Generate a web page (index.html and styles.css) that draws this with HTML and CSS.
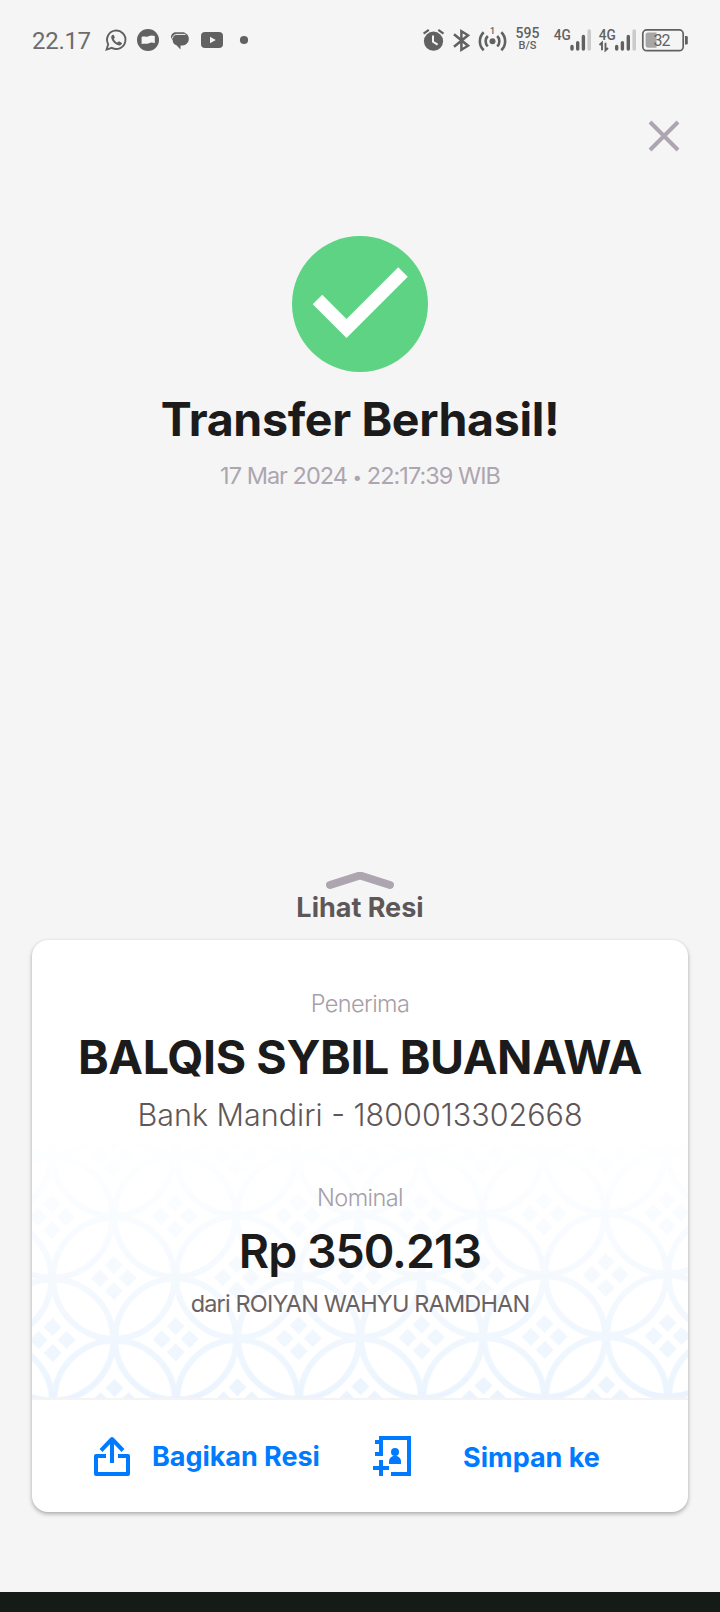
FILE: index.html
```html
<!DOCTYPE html>
<html lang="id">
<head>
<meta charset="utf-8">
<title>Transfer Berhasil</title>
<link rel="stylesheet" href="styles.css">
</head>
<body>
<main class="screen">
  <header class="status">
    <span class="clock">22.17</span>
    <svg class="ico" width="32" height="40" viewBox="100 20 32 40"><path d="M106.6 49.6l1.6-5.4a9.2 9.2 0 1 1 3.6 3.6z" fill="none" stroke="#616161" stroke-width="1.9"/><path d="M112.8 34.8c-1.400.6-1.900 2-1.400 3.700 1.100 3.600 3.900 6.200 7.600 7 1.400.2 2.900-.8 3-2.500l-3-1.700-1.700 1.300c-1.700-.8-2.900-2-3.500-3.600l1.100-1.400-1.100-2.700z" fill="#616161"/></svg>
    <svg class="ico" width="32" height="40" viewBox="132 20 32 40"><circle cx="148" cy="40" r="11" fill="#616161"/><path d="M141.600 37c2.200-1.200 4.400.4 6.800-.8 2.200-.9 4-1 6.400-.2v7.200c-2.400-.9-4.200-.8-6.400.2-2.400 1-4.600-.2-6.800.8z" fill="#f5f5f5"/></svg>
    <svg class="ico" width="32" height="40" viewBox="164 20 32 40"><path d="M171.600 38.500c-1-1.500-.8-3.300.4-4.300.8-1.300 2.300-1.900 4-1.900h6.500c1.800 0 3 .6 4 1.800 1.500.8 2.300 2.600 2.300 4.800 0 3.600-2.800 6.300-6.300 6.500h-2v4l-4-4.200c-2.400-.6-3.800-2.600-3.800-5z" fill="#616161"/><path d="M172.300 38.500c.6-2.900 2.200-4.100 4.700-4.100h8.500" fill="none" stroke="#f5f5f5" stroke-width="1"/></svg>
    <svg class="ico" width="32" height="40" viewBox="196 20 32 40"><rect x="201" y="32" width="22" height="16" rx="4" fill="#616161"/><path d="M210 36.800l5.800 3.200-5.800 3.200z" fill="#f5f5f5"/></svg>
    <svg class="ico" width="32" height="40" viewBox="228 20 32 40"><circle cx="244" cy="40" r="4.100" fill="#616161"/></svg>
    <span class="spring"></span>
    <svg class="ico" width="30" height="40" viewBox="420 20 30 40"><circle cx="433.500" cy="41.200" r="9.600" fill="#616161"/><path d="M423.600 33.700l5.200-3.900M438.300 29.800l5.200 3.900" stroke="#616161" stroke-width="2.200"/><path d="M433 35.500v6.300l4.600 2.900" fill="none" stroke="#f5f5f5" stroke-width="2"/></svg>
    <svg class="ico" width="26" height="40" viewBox="450 20 26 40"><path d="M454 34.300l14 11.400-6.600 4V31.300l6.600 4-14 11.400" fill="none" stroke="#616161" stroke-width="2.500"/></svg>
    <svg class="ico" width="34" height="40" viewBox="476 20 34 40"><circle cx="492.500" cy="41.200" r="3" fill="#616161"/><path d="M487.800 46.400a7.300 7.300 0 0 1 0-10.400M497.200 36a7.300 7.300 0 0 1 0 10.400M483.700 50.200a12.500 12.500 0 0 1 0-18M501.300 32.200a12.500 12.500 0 0 1 0 18" fill="none" stroke="#616161" stroke-width="2.600"/><text x="490" y="34" class="st" font-size="9">1</text></svg>
    <span class="speed"><b>595</b><i>B/S</i></span>
    <svg class="ico" width="44" height="40" viewBox="550 20 44 40"><text x="553.700" y="39.800" class="st" font-size="14" textLength="17" lengthAdjust="spacingAndGlyphs">4G</text><path d="M572 46.500v2.500M577.700 42.800v6.200M583.400 36.500v12.500" stroke="#616161" stroke-width="3.400" stroke-linecap="round"/><path d="M589.200 31v18" stroke="#cbcbcb" stroke-width="3.600" stroke-linecap="round"/></svg>
    <svg class="ico" width="46" height="40" viewBox="594 20 46 40"><text x="598.700" y="39.800" class="st" font-size="14" textLength="17" lengthAdjust="spacingAndGlyphs">4G</text><path d="M599.500 45l2.500-2.300v7.600M605.500 42.700v7.600l2.500-2.300" fill="none" stroke="#616161" stroke-width="1.900"/><path d="M616.700 46.500v2.500M622.400 42.800v6.200M628.300 36.500v12.500" stroke="#616161" stroke-width="3.400" stroke-linecap="round"/><path d="M634.200 31v18" stroke="#cbcbcb" stroke-width="3.600" stroke-linecap="round"/></svg>
    <svg class="ico" width="50" height="40" viewBox="640 20 50 40"><rect x="642.800" y="29.900" width="40.400" height="20.800" rx="4" fill="none" stroke="#616161" stroke-width="1.700"/><path d="M648 32.400h8.500v15.300H648q-2.400 0-2.400-2.400V34.800q0-2.400 2.400-2.400z" fill="#a6a6a6"/><path d="M685 36h1.500q1.300 0 1.300 1.300v6q0 1.300-1.300 1.300H685z" fill="#616161"/><text x="653.500" y="45.500" class="num" font-size="16" textLength="17">32</text></svg>
  </header>

  <div class="topbar">
    <svg width="32" height="32" viewBox="0 0 32 32"><path d="M2 2l28 28M30 2L2 30" stroke="#ada5af" stroke-width="4"/></svg>
  </div>

  <section class="result">
    <svg width="136" height="136" viewBox="0 0 136 136"><circle cx="68" cy="68" r="68" fill="#5dd383"/><path d="M25.500 63.500L54.500 92.500L111 36" fill="none" stroke="#fff" stroke-width="13.500"/></svg>
    <h1 class="title">Transfer Berhasil!</h1>
    <p class="date">17 Mar 2024 <span class="dot">•</span> 22:17:39 WIB</p>
  </section>

  <section class="peek">
    <svg width="68" height="20" viewBox="0 0 68 20"><path d="M4 13L34 3.500L64 13" fill="none" stroke="#ada5af" stroke-width="8" stroke-linecap="round" stroke-linejoin="round"/></svg>
    <p class="see">Lihat Resi</p>
  </section>

  <article class="card">
    <div class="details">
      <svg class="batik" width="656" height="268" viewBox="32 1130 656 268">
        <defs>
          <pattern id="kawung" x="-8.800" y="1217" width="123" height="123" patternUnits="userSpaceOnUse" patternTransform="rotate(-0.380 52 1340)">
            <g fill="none" stroke="#ebf4fe" stroke-width="6">
              <circle cx="61.500" cy="0" r="60.500"/><circle cx="61.500" cy="123" r="60.500"/>
              <circle cx="0" cy="61.500" r="60.500"/><circle cx="123" cy="61.500" r="60.500"/>
            </g>
            <g fill="#ebf4fe">
              <path id="gem" d="M61.500-22l9 9-9 9-9-9zM61.500 4l9 9-9 9-9-9zM47.500-9l9 9-9 9-9-9zM75.500-9l9 9-9 9-9-9z"/>
              <use href="#gem" y="123"/><use href="#gem" x="-61.500" y="61.500"/><use href="#gem" x="61.500" y="61.500"/>
            </g>
          </pattern>
          <linearGradient id="fade" x1="0" y1="0" x2="0" y2="1"><stop offset="0" stop-color="#000"/><stop offset=".5" stop-color="#777"/><stop offset="1" stop-color="#fff"/></linearGradient>
          <mask id="veil" maskUnits="userSpaceOnUse" x="32" y="1130" width="656" height="268"><rect x="32" y="1130" width="656" height="268" fill="url(#fade)"/></mask>
        </defs>
        <rect x="32" y="1130" width="656" height="268" fill="url(#kawung)" mask="url(#veil)"/>
      </svg>
      <p class="label receiver">Penerima</p>
      <h2 class="name">BALQIS SYBIL BUANAWA</h2>
      <p class="bank">Bank Mandiri - 1800013302668</p>
      <p class="label nominal">Nominal</p>
      <p class="amount">Rp 350.213</p>
      <p class="from">dari ROIYAN WAHYU RAMDHAN</p>
    </div>
    <footer class="actions">
      <a class="action share">
        <svg width="36" height="40" viewBox="0 0 36 40"><path d="M12 20H2v18h32V20H24M18 27V3M7 14.500L18 3l11 11.500" fill="none" stroke="#007bff" stroke-width="4" stroke-linejoin="round"/></svg>
        <span class="share-text">Bagikan Resi</span>
      </a>
      <a class="action save">
        <svg width="38" height="40" viewBox="0 0 38 40"><path d="M2 6h6V2h28v36H18M8 6v12H2M8 24v16M0 32h16" fill="none" stroke="#007bff" stroke-width="4"/><circle cx="22" cy="16" r="4" fill="#007bff"/><path d="M16 28v-2.500q0-4 4-5.500h4q4 1.500 4 5.500V28z" fill="#007bff"/></svg>
        <span class="save-text">Simpan ke</span>
      </a>
    </footer>
  </article>
  <div class="navbar"></div>
</main>
</body>
</html>
```
FILE: styles.css
```css
* { box-sizing: border-box; margin: 0; }
body { background: #f5f5f5; font-family: Inter, "Liberation Sans", sans-serif; }
svg { display: block; flex: none; }
.screen { width: 720px; height: 1612px; display: flex; flex-direction: column; overflow: hidden; }

.status { height: 80px; padding: 20px 30px 20px 32px; display: flex; font-family: Roboto, sans-serif; color: #616161; }
.clock { width: 68px; font-size: 24px; line-height: 42px; font-weight: 400; color: #6c6c6c; letter-spacing: -.3px; }
.ico { overflow: visible; }
.spring { flex: 1; }
.st { font-family: Roboto, sans-serif; font-weight: 500; fill: #616161; }
.num { font-family: Roboto, sans-serif; fill: #616161; }
.speed { width: 40px; padding-top: 6px; padding-right: 5px; display: flex; flex-direction: column; align-items: center; }
.speed b { font-size: 14px; line-height: 14px; font-weight: 500; }
.speed i { font-size: 11px; line-height: 11px; font-style: normal; font-weight: 500; }

.topbar { height: 156px; padding: 40px 40px 0; display: flex; justify-content: flex-end; }

.result { height: 636px; display: flex; flex-direction: column; align-items: center; }
.title { margin-top: 17px; font-size: 46.500px; line-height: 60px; font-weight: 700; letter-spacing: -.35px; color: #1b1b1b; white-space: nowrap; }
.date { margin-top: 12px; font-size: 23.500px; line-height: 30px; letter-spacing: -.98px; color: #ada5af; white-space: nowrap; }
.dot { font-size: 17px; vertical-align: 1px; }

.peek { height: 68px; display: flex; flex-direction: column; align-items: center; }
.see { font-size: 27px; line-height: 32px; font-weight: 700; color: #5f5757; }

.card { width: 656px; height: 572px; margin: 0 32px; background: #fff; border-radius: 16px; box-shadow: 0 2px 4px rgba(0,0,0,.3), 0 0 2px rgba(0,0,0,.06); display: flex; flex-direction: column; }
.details { position: relative; height: 460px; padding-top: 49px; border-bottom: 2px solid #f4f4f4; display: flex; flex-direction: column; align-items: center; white-space: nowrap; }
.batik { position: absolute; left: 0; bottom: 0; z-index: 0; }
.details p, .details h2 { position: relative; z-index: 1; }
.label { font-size: 23.500px; line-height: 30px; font-weight: 300; letter-spacing: -.58px; color: #a69ea8; }
.name { margin-top: 8px; font-size: 46.500px; line-height: 60px; font-weight: 700; letter-spacing: -.38px; color: #1b1b1b; }
.bank { margin-top: 8px; font-size: 30.500px; line-height: 40px; font-weight: 300; color: #5f5757; }
.nominal { margin-top: 48px; }
.amount { margin-top: 8px; font-size: 46.500px; line-height: 60px; font-weight: 600; letter-spacing: -1px; color: #1b1b1b; }
.from { margin-top: 8px; font-size: 23.500px; line-height: 30px; letter-spacing: -.84px; color: #6a6262; }

.actions { flex: 1; display: flex; padding: 36px 0 0 62px; color: #007bff; font-size: 27px; line-height: 40px; font-weight: 700; white-space: nowrap; }
.action { display: flex; }
.share { width: 279px; gap: 22px; }
.share-text { padding-top: 1px; letter-spacing: -.05px; }
.save { gap: 52px; }
.save-text { padding-top: 2px; }

.navbar { margin-top: 80px; height: 20px; background: #151c17; }
```
